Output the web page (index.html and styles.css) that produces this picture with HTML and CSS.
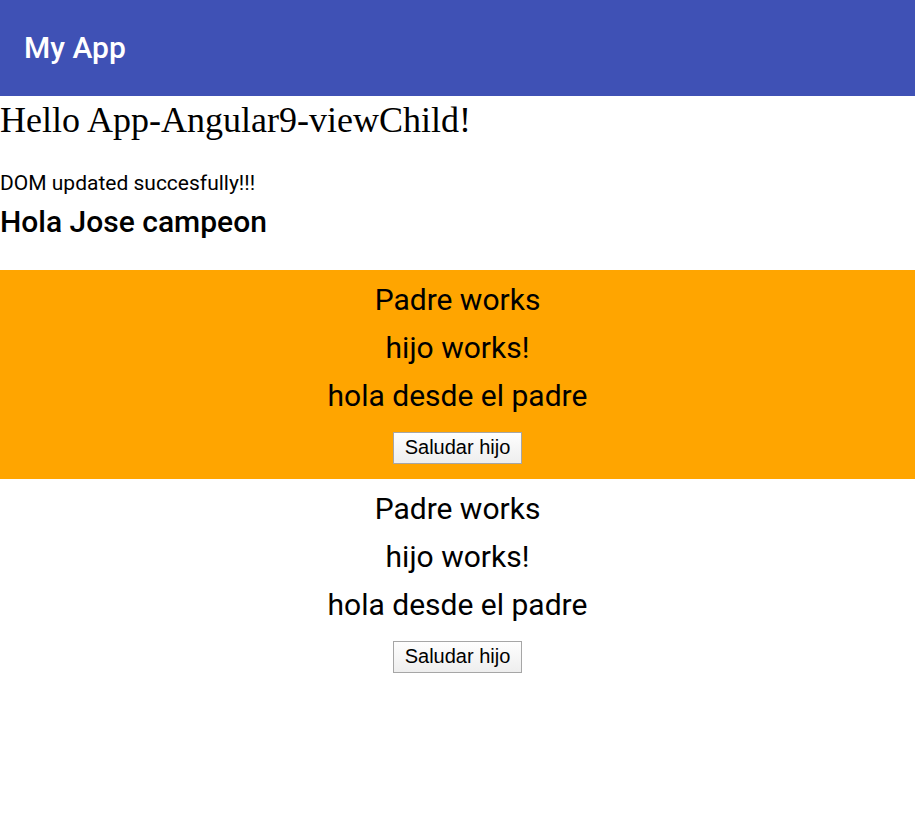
FILE: index.html
```html
<!DOCTYPE html>
<html lang="es">
<head>
<meta charset="utf-8">
<meta name="viewport" content="width=device-width, initial-scale=1">
<title>My App</title>
<link rel="stylesheet" href="styles.css">
</head>
<body>
<header class="toolbar"><h1 class="toolbar-title">My App</h1></header>
<main>
<p class="hello">Hello App-Angular9-viewChild!</p>
<p class="status">DOM updated succesfully!!!</p>
<h2 class="greeting">Hola Jose campeon</h2>
<section class="padre padre-highlight">
<p>Padre works</p>
<p>hijo works!</p>
<p>hola desde el padre</p>
<button type="button">Saludar hijo</button>
</section>
<section class="padre">
<p>Padre works</p>
<p>hijo works!</p>
<p>hola desde el padre</p>
<button type="button">Saludar hijo</button>
</section>
</main>
</body>
</html>
```
FILE: styles.css
```css
* { box-sizing: border-box; }
body {
  margin: 0;
  background: #fff;
  color: #000;
  font-family: Roboto, "Liberation Sans", sans-serif;
}
h1, h2, p { margin: 0; }
.toolbar {
  display: flex;
  align-items: center;
  height: 96px;
  padding: 0 24px;
  background: #3f51b5;
  color: #fff;
}
.toolbar-title {
  font-size: 30px;
  font-weight: 500;
  line-height: 48px;
}
.hello {
  padding-top: 4px;
  font-family: "Liberation Serif", serif;
  font-size: 36px;
  line-height: 40px;
}
.status {
  margin-top: 28px;
  font-size: 21px;
  line-height: 30px;
}
.greeting {
  margin-bottom: 24px;
  font-size: 30px;
  font-weight: 500;
  line-height: 48px;
}
.padre {
  padding: 6px 0 15px;
  font-size: 30px;
  line-height: 48px;
  text-align: center;
}
.padre-highlight { background: #ffa500; }
.padre button {
  display: block;
  height: 32px;
  margin: 12px auto 0;
  padding: 0 11px 2px;
  border: 1px solid #a6a6a6;
  border-radius: 0;
  background: linear-gradient(#fefefe, #eeeeee);
  color: #000;
  font-family: "Liberation Sans", Arial, sans-serif;
  font-size: 20px;
  line-height: 28px;
}
```
